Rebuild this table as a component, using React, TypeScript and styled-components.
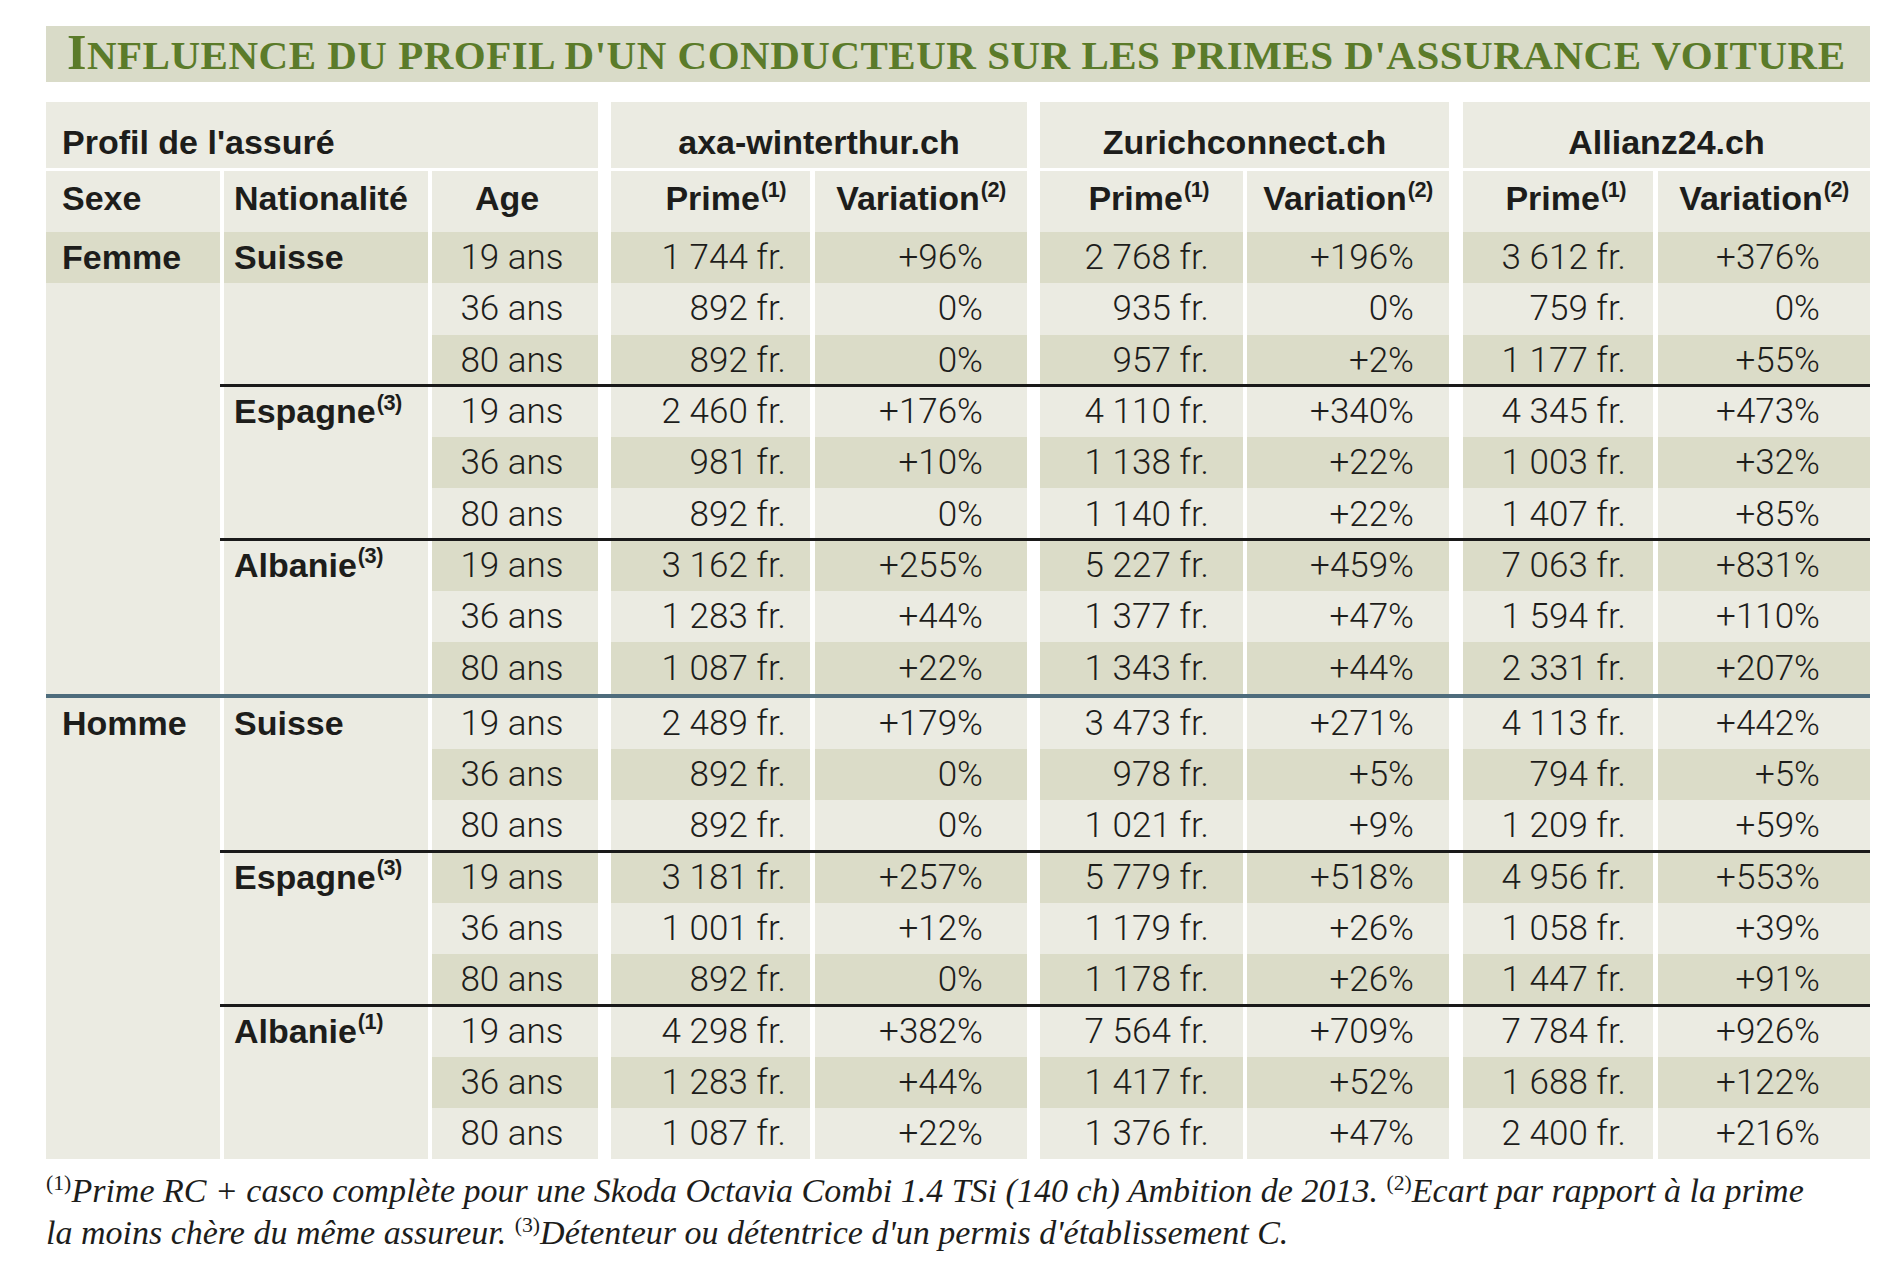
import React from 'react';
import styled, { createGlobalStyle } from 'styled-components';

const GlobalStyle = createGlobalStyle`
  html, body {
    margin: 0;
    padding: 0;
    background: #fff;
  }
  body {
    font-family: 'Liberation Sans', Arial, sans-serif;
    color: #1d1d1b;
  }
`;

const LIGHT = '#ebebe2';
const DARK = '#dbdcc8';

const Page = styled.div`
  width: 1824px;
  padding: 26px 0 0 46px;
`;

const Title = styled.h1`
  margin: 0;
  height: 56px;
  box-sizing: border-box;
  padding: 0 0 4px 21px;
  background: #d9dbc8;
  font-family: 'Liberation Serif', 'Times New Roman', serif;
  font-weight: 700;
  font-size: 41px;
  line-height: 52px;
  letter-spacing: 0.5px;
  color: #5b7b2a;
  white-space: nowrap;
`;

const BigCap = styled.span`
  font-size: 50px;
`;

const Table = styled.div`
  display: grid;
  margin-top: 20px;
  grid-template-columns: 178px 208px 179px 204px 225px 207px 216px 195px 212px;
  grid-template-rows: 69px 61px repeat(9, 51.3px) 4px repeat(9, 51.3px);
`;

type Place = { $row: number | string; $col: number | string; $gap: number };

const HeadCell = styled.div<Place & { $align: 'left' | 'center' | 'right'; $pl?: number; $pr?: number; $pt: number; $mb?: number }>`
  grid-row: ${p => p.$row};
  grid-column: ${p => p.$col};
  margin-right: ${p => p.$gap}px;
  margin-bottom: ${p => p.$mb ?? 0}px;
  box-sizing: border-box;
  padding: ${p => p.$pt}px ${p => p.$pr ?? 0}px 0 ${p => p.$pl ?? 0}px;
  background: ${LIGHT};
  text-align: ${p => p.$align};
  font-family: 'Liberation Sans', Arial, sans-serif;
  font-weight: 700;
  font-size: 34px;
  line-height: 34px;
  color: #1d1d1b;
  white-space: nowrap;
`;

const LabelCell = styled.div<Place & { $dark: boolean; $pl: number }>`
  grid-row: ${p => p.$row};
  grid-column: ${p => p.$col};
  margin-right: ${p => p.$gap}px;
  display: flex;
  align-items: center;
  padding-left: ${p => p.$pl}px;
  background: ${p => (p.$dark ? DARK : LIGHT)};
  font-family: 'Liberation Sans', Arial, sans-serif;
  font-weight: 700;
  font-size: 34px;
  color: #1d1d1b;
  white-space: nowrap;
`;

const DataCell = styled.div<Place & { $dark: boolean; $align: 'center' | 'flex-end'; $pr: number }>`
  grid-row: ${p => p.$row};
  grid-column: ${p => p.$col};
  margin-right: ${p => p.$gap}px;
  display: flex;
  align-items: center;
  justify-content: ${p => p.$align};
  padding-right: ${p => p.$pr}px;
  background: ${p => (p.$dark ? DARK : LIGHT)};
  font-family: Roboto, 'Liberation Sans', Arial, sans-serif;
  font-weight: 300;
  font-size: 35px;
  color: #1d1d1b;
  white-space: nowrap;
`;

const Rule = styled.div<{ $row: number }>`
  grid-row: ${p => p.$row};
  grid-column: 2 / -1;
  align-self: start;
  height: 3px;
  margin: -1.5px 0 0 -4px;
  background: #1a1a1a;
  z-index: 1;
`;

const SexRule = styled.div`
  grid-row: 12;
  grid-column: 1 / -1;
  background: #4e6c7c;
`;

const Sup = styled.sup`
  font-size: 0.64em;
  line-height: 0;
  vertical-align: 0.62em;
  margin-left: 1px;
  letter-spacing: -0.5px;
`;

const Notes = styled.p`
  margin: 11px 0 0;
  font-family: 'Liberation Serif', 'Times New Roman', serif;
  font-style: italic;
  font-size: 34px;
  line-height: 42px;
  color: #1d1d1b;
  white-space: nowrap;
`;

const NoteSup = styled.sup`
  font-size: 0.64em;
  line-height: 0;
  vertical-align: 0.55em;
  font-style: normal;
`;

type Nation = { name: string; note: string; rows: string[][] };
type Sex = { label: string; nations: Nation[] };

const data: Sex[] = [
  {
    label: 'Femme',
    nations: [
      {
        name: 'Suisse',
        note: '',
        rows: [
          ['19 ans', '1 744 fr.', '+96%', '2 768 fr.', '+196%', '3 612 fr.', '+376%'],
          ['36 ans', '892 fr.', '0%', '935 fr.', '0%', '759 fr.', '0%'],
          ['80 ans', '892 fr.', '0%', '957 fr.', '+2%', '1 177 fr.', '+55%'],
        ],
      },
      {
        name: 'Espagne',
        note: '(3)',
        rows: [
          ['19 ans', '2 460 fr.', '+176%', '4 110 fr.', '+340%', '4 345 fr.', '+473%'],
          ['36 ans', '981 fr.', '+10%', '1 138 fr.', '+22%', '1 003 fr.', '+32%'],
          ['80 ans', '892 fr.', '0%', '1 140 fr.', '+22%', '1 407 fr.', '+85%'],
        ],
      },
      {
        name: 'Albanie',
        note: '(3)',
        rows: [
          ['19 ans', '3 162 fr.', '+255%', '5 227 fr.', '+459%', '7 063 fr.', '+831%'],
          ['36 ans', '1 283 fr.', '+44%', '1 377 fr.', '+47%', '1 594 fr.', '+110%'],
          ['80 ans', '1 087 fr.', '+22%', '1 343 fr.', '+44%', '2 331 fr.', '+207%'],
        ],
      },
    ],
  },
  {
    label: 'Homme',
    nations: [
      {
        name: 'Suisse',
        note: '',
        rows: [
          ['19 ans', '2 489 fr.', '+179%', '3 473 fr.', '+271%', '4 113 fr.', '+442%'],
          ['36 ans', '892 fr.', '0%', '978 fr.', '+5%', '794 fr.', '+5%'],
          ['80 ans', '892 fr.', '0%', '1 021 fr.', '+9%', '1 209 fr.', '+59%'],
        ],
      },
      {
        name: 'Espagne',
        note: '(3)',
        rows: [
          ['19 ans', '3 181 fr.', '+257%', '5 779 fr.', '+518%', '4 956 fr.', '+553%'],
          ['36 ans', '1 001 fr.', '+12%', '1 179 fr.', '+26%', '1 058 fr.', '+39%'],
          ['80 ans', '892 fr.', '0%', '1 178 fr.', '+26%', '1 447 fr.', '+91%'],
        ],
      },
      {
        name: 'Albanie',
        note: '(1)',
        rows: [
          ['19 ans', '4 298 fr.', '+382%', '7 564 fr.', '+709%', '7 784 fr.', '+926%'],
          ['36 ans', '1 283 fr.', '+44%', '1 417 fr.', '+52%', '1 688 fr.', '+122%'],
          ['80 ans', '1 087 fr.', '+22%', '1 376 fr.', '+47%', '2 400 fr.', '+216%'],
        ],
      },
    ],
  },
];

// white gap to the right of each column, and right padding of the figures
const gaps = [4, 4, 13, 5, 13, 4, 14, 5, 0];
const figurePad = [6, 24, 44, 34, 35, 27, 50];

const insurers = [
  { name: 'axa-winterthur.ch', col: '4 / span 2', gap: 13 },
  { name: 'Zurichconnect.ch', col: '6 / span 2', gap: 14 },
  { name: 'Allianz24.ch', col: '8 / span 2', gap: 0 },
];

const title = "Influence du profil d'un conducteur sur les primes d'assurance voiture".toUpperCase();

const App = () => {
  const body: React.ReactNode[] = [];
  let i = 0;

  data.forEach((sex, si) => {
    sex.nations.forEach((nation, ni) => {
      nation.rows.forEach((row, ri) => {
        const gridRow = si === 0 ? 3 + i : 4 + i;
        const dark = i % 2 === 0;
        const labelDark = i === 0;
        body.push(
          <LabelCell key={`s${i}`} $row={gridRow} $col={1} $gap={gaps[0]} $dark={labelDark} $pl={16}>
            {ni === 0 && ri === 0 ? sex.label : ''}
          </LabelCell>,
          <LabelCell key={`n${i}`} $row={gridRow} $col={2} $gap={gaps[1]} $dark={labelDark} $pl={10}>
            {ri === 0 && (
              <span>
                {nation.name}
                {nation.note && <Sup>{nation.note}</Sup>}
              </span>
            )}
          </LabelCell>,
        );
        row.forEach((value, c) => {
          body.push(
            <DataCell
              key={`d${i}-${c}`}
              $row={gridRow}
              $col={c + 3}
              $gap={gaps[c + 2]}
              $dark={dark}
              $align={c === 0 ? 'center' : 'flex-end'}
              $pr={figurePad[c]}
            >
              {value}
            </DataCell>,
          );
        });
        if (ni > 0 && ri === 0) body.push(<Rule key={`r${i}`} $row={gridRow} />);
        i += 1;
      });
    });
  });

  return (
    <Page>
      <GlobalStyle />
      <Title>
        <BigCap>{title[0]}</BigCap>
        {title.slice(1)}
      </Title>

      <Table>
        <HeadCell $row={1} $col="1 / span 3" $gap={13} $align="left" $pl={16} $pt={23} $mb={3}>
          Profil de l'assuré
        </HeadCell>
        {insurers.map(ins => (
          <HeadCell key={ins.name} $row={1} $col={ins.col} $gap={ins.gap} $align="center" $pt={23} $mb={3}>
            {ins.name}
          </HeadCell>
        ))}

        <HeadCell $row={2} $col={1} $gap={gaps[0]} $align="left" $pl={16} $pt={10}>
          Sexe
        </HeadCell>
        <HeadCell $row={2} $col={2} $gap={gaps[1]} $align="left" $pl={10} $pt={10}>
          Nationalité
        </HeadCell>
        <HeadCell $row={2} $col={3} $gap={gaps[2]} $align="center" $pr={16} $pt={10}>
          Age
        </HeadCell>
        {[0, 1, 2].map(g => (
          <React.Fragment key={g}>
            <HeadCell $row={2} $col={4 + g * 2} $gap={gaps[3 + g * 2]} $align="right" $pr={figurePad[1 + g * 2]} $pt={10}>
              Prime<Sup>(1)</Sup>
            </HeadCell>
            <HeadCell $row={2} $col={5 + g * 2} $gap={gaps[4 + g * 2]} $align="center" $pt={10}>
              Variation<Sup>(2)</Sup>
            </HeadCell>
          </React.Fragment>
        ))}

        {body}
        <SexRule />
      </Table>

      <Notes>
        <NoteSup>(1)</NoteSup>Prime RC + casco complète pour une Skoda Octavia Combi 1.4 TSi (140 ch) Ambition de 2013.{' '}
        <NoteSup>(2)</NoteSup>Ecart par rapport à la prime
        <br />
        la moins chère du même assureur. <NoteSup>(3)</NoteSup>Détenteur ou détentrice d'un permis d'établissement C.
      </Notes>
    </Page>
  );
};

export default App;
